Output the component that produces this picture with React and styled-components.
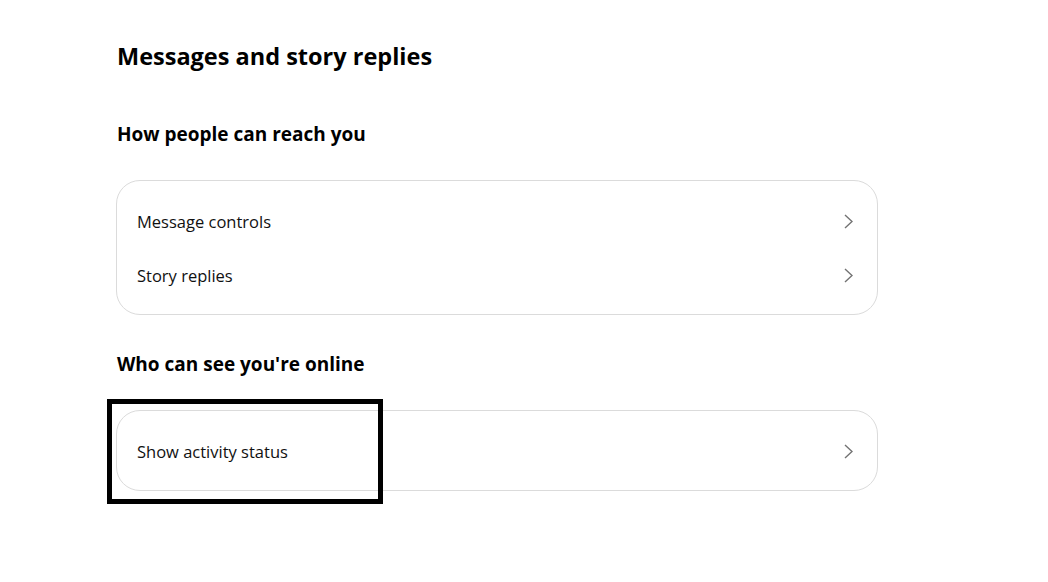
import React from 'react';
import styled, { createGlobalStyle } from 'styled-components';

const GlobalStyle = createGlobalStyle`
  body {
    margin: 0;
    background: #fff;
    font-family: "Open Sans", "Noto Sans", sans-serif;
    color: #000;
  }
`

const Page = styled.div`
  width: 762px;
  padding: 40px 0 90px 116px;
  box-sizing: content-box;
`

const Title = styled.h1`
  margin: 0 0 0 1px;
  font-size: 23.5px;
  font-weight: 700;
  line-height: 32px;
`

const SectionTitle = styled.h2`
  margin: ${props => props.top}px 0 0 1px;
  font-size: 19px;
  font-weight: 700;
  line-height: 26px;
`

const CardWrap = styled.div`
  position: relative;
  margin-top: ${props => props.top}px;
`

const Card = styled.div`
  border: 1px solid #dbdbdb;
  border-radius: 24px;
  padding: 13px 0 12px;
`

const Row = styled.div`
  display: flex;
  align-items: center;
  justify-content: space-between;
  height: 54px;
  padding: 0 24px 0 20px;
  font-size: 16.5px;
  color: #111;
  cursor: pointer;
`

const Chevron = styled.svg`
  width: 9px;
  height: 15px;
  color: #737373;
`

const Highlight = styled.div`
  position: absolute;
  left: -9px;
  top: -11px;
  width: 276px;
  height: 105px;
  border: 5px solid #000;
  box-sizing: border-box;
  pointer-events: none;
`

const Item = ({ label }) => (
  <Row>
    <span>{label}</span>
    <Chevron viewBox="0 0 9 15" fill="none" stroke="currentColor" strokeWidth="1.4">
      <path d="M1 1 L8 7.5 L1 14" />
    </Chevron>
  </Row>
)

export default function App() {
  return (
    <>
      <GlobalStyle />
      <Page>
        <Title>Messages and story replies</Title>
        <SectionTitle top={49}>How people can reach you</SectionTitle>
        <CardWrap top={33}>
          <Card>
            <Item label="Message controls" />
            <Item label="Story replies" />
          </Card>
        </CardWrap>
        <SectionTitle top={36}>Who can see you're online</SectionTitle>
        <CardWrap top={33}>
          <Card>
            <Item label="Show activity status" />
          </Card>
          <Highlight />
        </CardWrap>
      </Page>
    </>
  )
}
